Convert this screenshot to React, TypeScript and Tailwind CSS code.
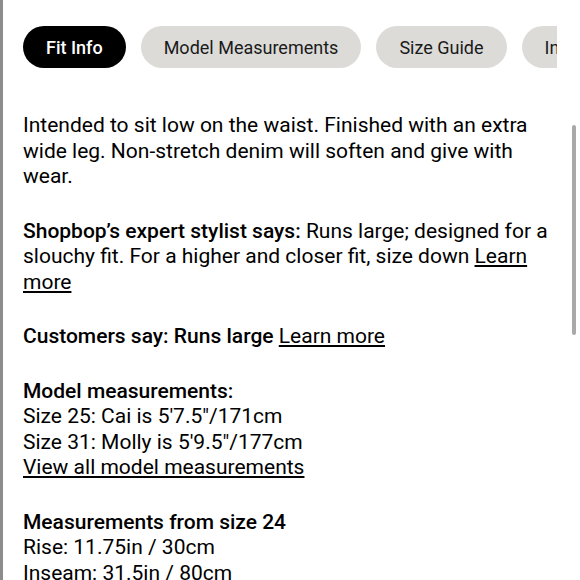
export default function App() {
  const tabs = ["Fit Info", "Model Measurements", "Size Guide", "Inseam & Rise"];

  return (
    <div className="relative h-[580px] w-[580px] overflow-hidden border-l-[3px] border-[#8c8c8c] bg-white font-['Roboto',sans-serif] text-black">
      {/* tabs */}
      <div className="ml-[20px] mr-[23px] mt-[26px] flex gap-[15px] overflow-hidden">
        {tabs.map((t, i) => (
          <div
            key={t}
            className={
              "flex h-[42px] shrink-0 items-center rounded-full px-[23px] text-[18px] " +
              (i === 0 ? "bg-black font-medium text-white" : "bg-[#dcdbd8] text-[#1a1a1a]")
            }
          >
            {t}
          </div>
        ))}
      </div>

      {/* fit details */}
      <div className="ml-[20px] mr-[21px] mt-[45px] flex flex-col gap-[29px] text-[21px] leading-[25.5px]">
        <p>
          Intended to sit low on the waist. Finished with an extra wide leg. Non-stretch denim will soften and give
          with wear.
        </p>
        <p>
          <span className="font-medium">Shopbop’s expert stylist says:</span> Runs large; designed for a slouchy
          fit. For a higher and closer fit, size down <span className="underline underline-offset-2">Learn more</span>
        </p>
        <p>
          <span className="font-medium">Customers say: Runs large</span>{" "}
          <span className="underline underline-offset-2">Learn more</span>
        </p>
        <div>
          <p className="font-medium">Model measurements:</p>
          <p>Size 25: Cai is 5'7.5"/171cm</p>
          <p>Size 31: Molly is 5'9.5"/177cm</p>
          <p className="underline underline-offset-2">View all model measurements</p>
        </div>
        <div>
          <p className="font-medium">Measurements from size 24</p>
          <p>Rise: 11.75in / 30cm</p>
          <p>Inseam: 31.5in / 80cm</p>
          <p>Leg opening: 24in / 61cm</p>
        </div>
      </div>

      {/* scrollbar */}
      <div className="absolute right-[4px] top-[125px] h-[210px] w-[4px] rounded-full bg-[#a9a9a9]" />
    </div>
  );
}
